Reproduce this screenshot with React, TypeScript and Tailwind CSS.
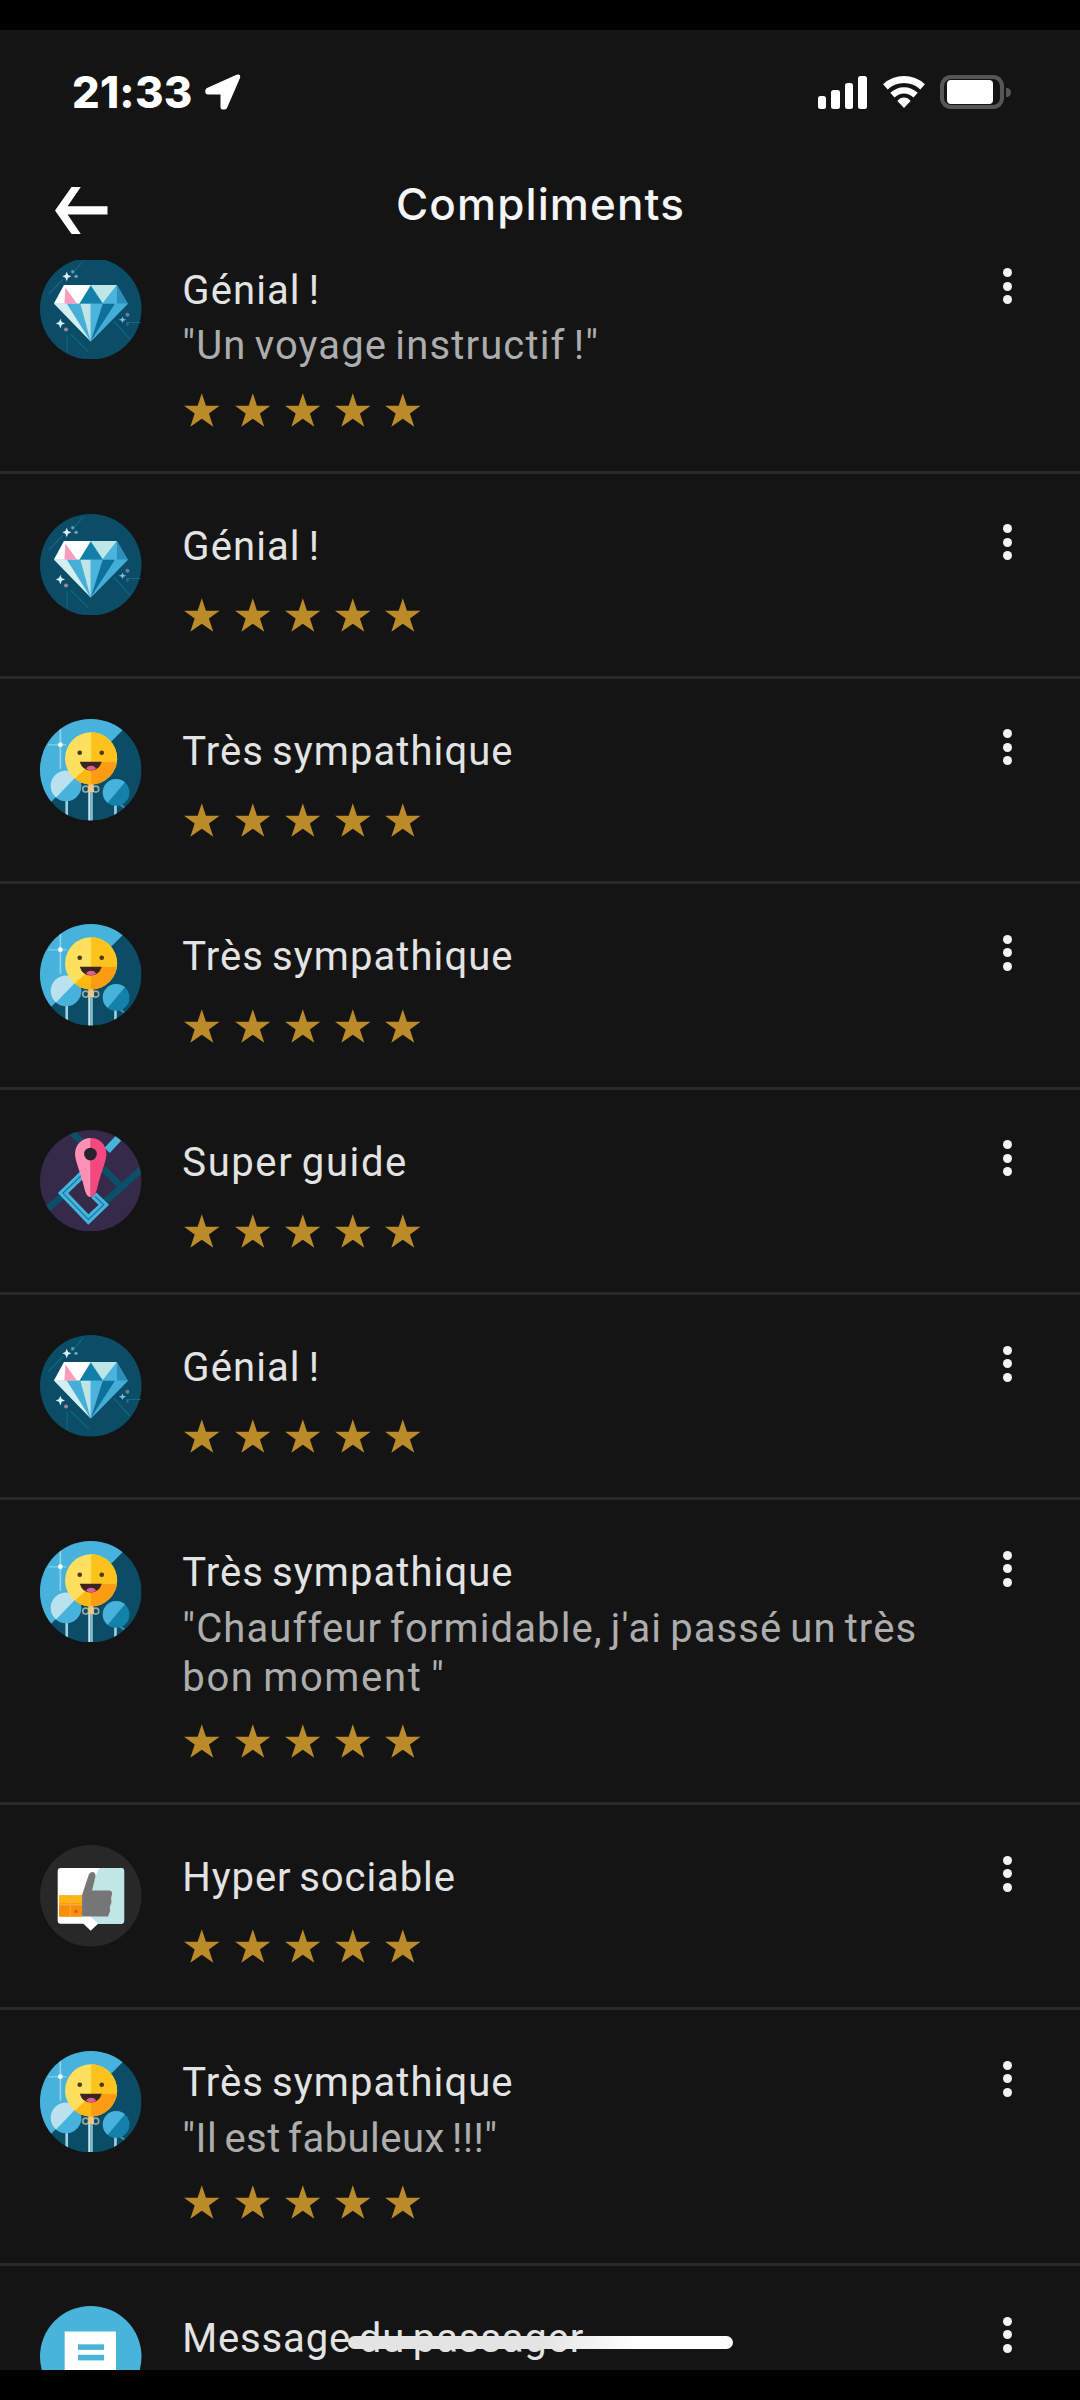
type AvatarKind = 'diamond' | 'smile' | 'guide' | 'thumb' | 'message';

interface Line {
  text: string;
  tracking: string;
}

interface Compliment {
  kind: AvatarKind;
  title: Line;
  comment?: Line[];
  height: string;
}

const GENIAL: Line = { text: 'Génial !', tracking: 'tracking-[1.1px]' };
const SYMPA: Line = { text: 'Très sympathique', tracking: 'tracking-[1.08px]' };

const SINGLE = 'h-[205.4px]';
const DOUBLE = 'h-[255.8px]';
const TRIPLE = 'h-[304.6px]';

const COMPLIMENTS: Compliment[] = [
  {
    kind: 'diamond',
    title: GENIAL,
    comment: [{ text: '"Un voyage instructif !"', tracking: 'tracking-[1.15px]' }],
    height: DOUBLE,
  },
  { kind: 'diamond', title: GENIAL, height: SINGLE },
  { kind: 'smile', title: SYMPA, height: SINGLE },
  { kind: 'smile', title: SYMPA, height: SINGLE },
  { kind: 'guide', title: { text: 'Super guide', tracking: 'tracking-[1.6px]' }, height: SINGLE },
  { kind: 'diamond', title: GENIAL, height: SINGLE },
  {
    kind: 'smile',
    title: SYMPA,
    comment: [
      { text: '"Chauffeur formidable, j\'ai passé un très', tracking: 'tracking-[1.09px]' },
      { text: 'bon moment "', tracking: 'tracking-[1.65px]' },
    ],
    height: TRIPLE,
  },
  { kind: 'thumb', title: { text: 'Hyper sociable', tracking: 'tracking-[0.9px]' }, height: SINGLE },
  {
    kind: 'smile',
    title: SYMPA,
    comment: [{ text: '"Il est fabuleux !!!"', tracking: 'tracking-[0.45px]' }],
    height: DOUBLE,
  },
  { kind: 'message', title: { text: 'Message du passager', tracking: 'tracking-[0.84px]' }, height: SINGLE },
];

function Diamond() {
  return (
    <svg viewBox="61 57 304 304" className="h-full w-full">
      <circle cx="213" cy="209" r="152" fill="#0b4d66" />
      <g stroke="#116a87" strokeWidth="3" fill="none">
        <path d="M190 66L156 106M130 120L86 166M152 284L208 340M142 288V340M282 246L330 300M318 250H362" />
      </g>
      <path d="M133 138H291L324 194L213 307L103 192Z" fill="#4fb3d9" />
      <path d="M133 138H213L180 194H103Z" fill="#fff" />
      <path d="M137 145L172 194H134Z" fill="#fb9cbd" />
      <path d="M213 140L249 194H179Z" fill="#127fa9" />
      <path d="M213 138H291L249 192Z" fill="#bfe6e6" />
      <path d="M291 138L324 194H291Z" fill="#2b8fbb" />
      <path d="M291 142V194H249Z" fill="#4ab4dd" />
      <path d="M103 194H142L213 307Z" fill="#d3eef0" />
      <path d="M142 194H182L213 307Z" fill="#46afd8" />
      <path d="M182 194H213V307Z" fill="#c0e5e6" />
      <path d="M213 194H249L213 307Z" fill="#4ab4dd" />
      <path d="M249 194H286L213 307Z" fill="#0f7199" />
      <path d="M286 194H324L213 307Z" fill="#43add6" />
      <path d="M141 98L145 108L155 112L145 116L141 127L137 116L128 112L137 108Z" fill="#d6f2f8" />
      <path d="M122 239L126 249L136 253L126 257L122 268L118 257L108 253L118 249Z" fill="#d6f2f8" />
      <path d="M308 232L311 239L319 242L311 245L308 252L305 245L297 242L305 239Z" fill="#6cc5e2" />
      <circle cx="159" cy="98" r="5" fill="#5b9fb5" />
      <circle cx="169" cy="112" r="5" fill="#6ba9bd" />
      <circle cx="139" cy="271" r="6" fill="#9a86a9" />
      <circle cx="323" cy="227" r="6" fill="#6f7c9a" />
      <circle cx="323" cy="256" r="4" fill="#41658a" />
    </svg>
  );
}

function Smile() {
  return (
    <svg viewBox="61 57 304 304" className="h-full w-full">
      <defs>
        <clipPath id="smile-disc">
          <circle cx="213" cy="209" r="152" />
        </clipPath>
        <clipPath id="smile-face">
          <circle cx="214" cy="175" r="78" />
        </clipPath>
        <clipPath id="smile-left">
          <circle cx="139" cy="257" r="46" />
        </clipPath>
        <clipPath id="smile-right">
          <circle cx="289" cy="277" r="40" />
        </clipPath>
      </defs>
      <g clipPath="url(#smile-disc)">
        <rect x="61" y="57" width="304" height="304" fill="#0b4d66" />
        <path d="M61 57H342L90 309L61 330Z" fill="#47b2dc" />
        <path d="M122 84V206" stroke="#8fd3ec" strokeWidth="5" />
        <path d="M86 134H140" stroke="#7bcbe8" strokeWidth="4" />
        <circle cx="122" cy="134" r="7" fill="#fff" />
        <path d="M141 300V348" stroke="#9ccfdf" strokeWidth="8" />
        <path d="M287 314V344" stroke="#9ccfdf" strokeWidth="8" />
        <path d="M300 312L313 322" stroke="#3b93b4" strokeWidth="6" />
        <path d="M209 262V364" stroke="#c8e3ea" strokeWidth="7" />
        <path d="M216 262V364" stroke="#7fb9cc" strokeWidth="7" />
        <g clipPath="url(#smile-left)">
          <rect x="90" y="208" width="100" height="100" fill="#47b2dc" />
          <path d="M90 208H190L104 297L90 297Z" fill="#b9e1ee" />
        </g>
        <g clipPath="url(#smile-right)">
          <rect x="245" y="235" width="90" height="90" fill="#1481ab" />
          <path d="M245 235H325L262 310L245 310Z" fill="#47b2dc" />
        </g>
        <circle cx="198" cy="267" r="9" fill="none" stroke="#9aa8a0" strokeWidth="5" />
        <circle cx="228" cy="267" r="9" fill="none" stroke="#9aa8a0" strokeWidth="5" />
        <path d="M206 250H221L223 276H204Z" fill="#f0c887" />
        <g clipPath="url(#smile-face)">
          <rect x="130" y="90" width="170" height="170" fill="#ffdf5e" />
          <path d="M214 90H300V185H214Z" fill="#fdc21c" />
          <path d="M214 185H300V260H143L214 190Z" fill="#fb9c12" />
          <path d="M150 250L214 190V260H150Z" fill="#fdb813" />
        </g>
        <circle cx="180" cy="158" r="7" fill="#4a3a1c" />
        <circle cx="246" cy="158" r="7" fill="#4a3a1c" />
        <path d="M180 185H246Q238 211 213 211Q188 211 180 185Z" fill="#3a2420" />
        <path d="M199 206Q203 197 214 197Q225 197 229 206Q213 215 199 206Z" fill="#e25c9b" />
      </g>
    </svg>
  );
}

function Guide() {
  return (
    <svg viewBox="61 57 304 304" className="h-full w-full">
      <defs>
        <clipPath id="guide-disc">
          <circle cx="213" cy="209" r="152" />
        </clipPath>
      </defs>
      <g clipPath="url(#guide-disc)">
        <rect x="61" y="57" width="304" height="304" fill="#352a49" />
        <g stroke="#0b4f68" strokeWidth="20" fill="none">
          <path d="M152 60L184 92" />
          <path d="M80 296L140 244" />
          <path d="M250 172L298 220" />
          <path d="M256 272L370 170" />
        </g>
        <path d="M296 82L262 118M188 190L130 246L206 325L252 281L222 252" fill="none" stroke="#45b5dd" strokeWidth="22" />
        <path d="M188 190L130 246L206 325L252 281L226 256" fill="none" stroke="#1c7ba6" strokeWidth="4" />
      </g>
      <path d="M213 81C185 81 166 102 166 129C166 151 181 178 194 232C198 248 203 258 213 258Z" fill="#ff8fb4" />
      <path d="M213 81C241 81 260 102 260 129C260 151 245 178 232 232C228 248 223 258 213 258Z" fill="#f4487f" />
      <circle cx="212" cy="129" r="19" fill="#28222f" />
    </svg>
  );
}

function Thumb() {
  return (
    <svg viewBox="61 43 304 304" className="h-full w-full">
      <circle cx="213" cy="195" r="152" fill="#282828" />
      <path d="M123 112H304Q313 112 313 121V270Q313 279 304 279H235L213 300L191 279H123Q114 279 114 270V121Q114 112 123 112Z" fill="#fff" />
      <path d="M239 112H304Q313 112 313 121V270Q313 279 304 279H235L213 258L190 210Z" fill="#c0e6e5" />
      <path d="M190 258H213V279H191Z" fill="#fff" />
      <rect x="118" y="194" width="69" height="64" fill="#f68f0c" />
      <rect x="118" y="194" width="69" height="24" fill="#fdb515" />
      <path d="M152 194V258M118 222H187" stroke="#f9a83a" strokeWidth="4" />
      <circle cx="169" cy="242" r="5" fill="#e9532c" />
      <path d="M187 193L207 132Q211 122 220 124Q228 127 227 137L217 179H271Q278 181 277 189L274 202L275 215L270 228L271 240L265 257H187Z" fill="#767676" />
    </svg>
  );
}

function Message() {
  return (
    <svg viewBox="0 0 101.5 101.5" className="h-full w-full">
      <circle cx="50.75" cy="50.75" r="50.75" fill="#49b4da" />
      <rect x="24.7" y="25.5" width="51.3" height="52" fill="#fff" />
      <rect x="38" y="38.3" width="26" height="5.6" fill="#49b4da" />
      <rect x="38" y="48.8" width="26" height="5.6" fill="#49b4da" />
    </svg>
  );
}

const AVATARS: Record<AvatarKind, () => React.JSX.Element> = {
  diamond: Diamond,
  smile: Smile,
  guide: Guide,
  thumb: Thumb,
  message: Message,
};

function Stars() {
  return (
    <div className="flex gap-[14.7px] pl-[2px]">
      {[0, 1, 2, 3, 4].map((i) => (
        <svg key={i} viewBox="0 0 36 34" className="h-[34px] w-[35.6px]">
          <path d="M18 0L22.2 12.6H36L25.2 20.6L29.6 34L18 25.8L6.4 34L10.8 20.6L0 12.6H13.8Z" fill="#bb8a29" />
        </svg>
      ))}
    </div>
  );
}

function Row({ item }: { item: Compliment }) {
  const Avatar = AVATARS[item.kind];
  return (
    <li className={`flex shrink-0 border-b-[3px] border-[#292929] pl-[40.3px] ${item.height}`}>
      <div className="mt-[40.2px] h-[101.5px] w-[101.5px] shrink-0">
        <Avatar />
      </div>
      <div className="ml-[40.5px] flex flex-1 flex-col pt-[48px] pb-[44px] text-[40px] whitespace-nowrap [word-spacing:-3px]">
        <h2 className={`leading-[50px] text-[#e3e3e3] ${item.title.tracking}`}>{item.title.text}</h2>
        {item.comment && (
          <p className="mt-[5.5px] leading-[49px] text-[#adadad]">
            {item.comment.map((line) => (
              <span key={line.text} className={`block ${line.tracking}`}>
                {line.text}
              </span>
            ))}
          </p>
        )}
        <div className="mt-auto">
          <Stars />
        </div>
      </div>
      <button aria-label="Options" className="mt-[50.5px] mr-[68px] flex h-[36px] w-[9px] flex-col justify-between">
        <span className="h-[9px] w-[9px] rounded-full bg-[#f2f2f2]" />
        <span className="h-[9px] w-[9px] rounded-full bg-[#f2f2f2]" />
        <span className="h-[9px] w-[9px] rounded-full bg-[#f2f2f2]" />
      </button>
    </li>
  );
}

function StatusBar() {
  return (
    <div className="flex h-[124px] items-center justify-between pr-[69.5px] pl-[72px]">
      <div className="flex items-center">
        <span className="w-[133px] font-['Inter'] text-[43.5px] leading-[52px] font-extrabold tracking-[0.2px] text-white">21:33</span>
        <svg viewBox="0 0 36 36" className="h-[36px] w-[36px]">
          <path d="M31.5 .8Q36.2 -.6 35 4L22 34Q21.3 35.6 19.2 35.6H17.6Q15.6 35.4 15.5 33.2V20.5H3Q.6 20.4 .3 18.4V16.6Q.5 14.6 2.6 13.8Z" fill="#fff" />
        </svg>
      </div>
      <div className="flex items-center">
        <div className="flex h-[33px] items-end gap-[4.9px]">
          <span className="h-[13px] w-[8.7px] rounded-[2.5px] bg-white" />
          <span className="h-[19px] w-[8.7px] rounded-[2.5px] bg-white" />
          <span className="h-[26px] w-[8.7px] rounded-[2.5px] bg-white" />
          <span className="h-[33px] w-[8.7px] rounded-[2.5px] bg-white" />
        </div>
        <svg viewBox="0 0 42 32" className="ml-[16px] h-[32px] w-[42px]">
          <path d="M2.4 10.8Q10.6 3.6 21 3.6T39.6 10.8" fill="none" stroke="#fff" strokeWidth="7" />
          <path d="M9.4 19.2Q14.6 14.4 21 14.4T32.6 19.2" fill="none" stroke="#fff" strokeWidth="6.4" />
          <path d="M14.4 25Q17.2 21.6 21 21.6T27.6 25L21 32Z" fill="#fff" />
        </svg>
        <div className="ml-[15px] flex h-[34px] w-[64px] items-center rounded-[11px] border-[4px] border-[#565656] pl-[3px]">
          <span className="h-[24px] w-[46px] rounded-[4px] bg-white" />
        </div>
        <span className="ml-[2px] h-[9px] w-[4.5px] rounded-r-full bg-[#565656]" />
      </div>
    </div>
  );
}

function Header() {
  return (
    <header className="grid h-[106px] grid-cols-[1fr_auto_1fr] items-start">
      <button aria-label="Retour" className="mt-[33px] ml-[55px] w-fit">
        <svg viewBox="0 0 53 47" className="h-[47px] w-[53px]">
          <path d="M16.5 0H25.8L12.6 19.2H52.5V27.4H12.6L25.8 47H16.5L0 23.4Z" fill="#fff" />
        </svg>
      </button>
      <h1 className="mt-[24px] pl-[1px] font-['Inter'] text-[44px] leading-[52px] font-medium tracking-[1.1px] text-[#f5f5f5]">Compliments</h1>
    </header>
  );
}

export default function App() {
  return (
    <div className="flex h-[2400px] w-[1080px] flex-col bg-black py-[30px] font-['Roboto',sans-serif]">
      <main className="relative flex h-[2340px] flex-col overflow-hidden bg-[#141414]">
        <StatusBar />
        <Header />
        <ul className="flex min-h-0 flex-1 flex-col overflow-hidden">
          <li aria-hidden="true" className="-mt-[42.3px] shrink-0" />
          {COMPLIMENTS.map((item, i) => (
            <Row key={i} item={item} />
          ))}
        </ul>
        <div className="absolute bottom-[21px] left-[347.5px] h-[13px] w-[385px] rounded-full bg-linear-to-r from-[#e4e4e4] from-50% to-white to-75%" />
      </main>
    </div>
  );
}
